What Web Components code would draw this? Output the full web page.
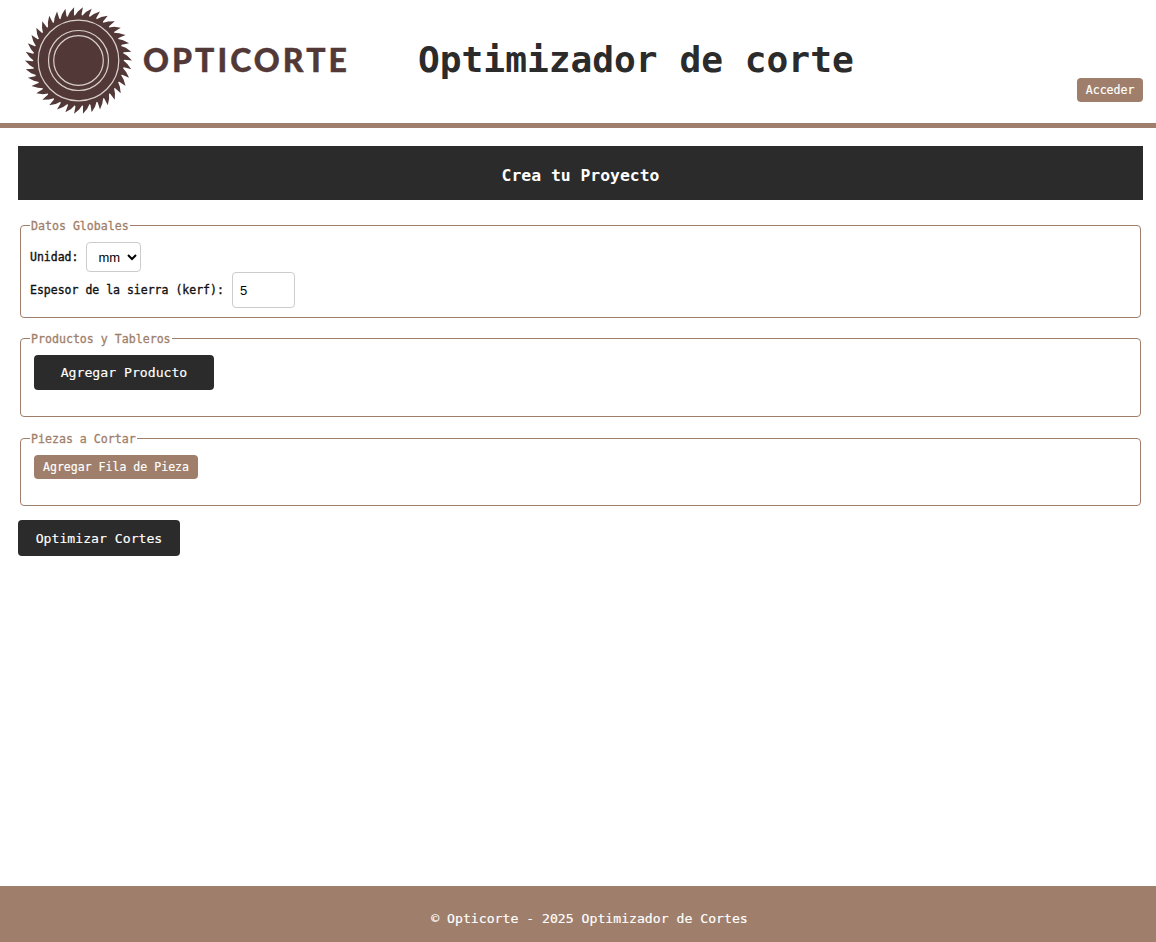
<!DOCTYPE html>
<html lang="es">
<head>
<meta charset="utf-8">
<title>Optimizador de corte</title>
<style>
  html, body { margin: 0; height: 100%; }
  body {
    display: flex;
    flex-direction: column;
    min-height: 942px;
    font-family: "DejaVu Sans Mono", monospace;
    background: #ffffff;
    color: #111111;
  }
  main { display: block; flex: 1; padding: 18px 13px 0 18px; }
</style>
</head>
<body>
<app-header></app-header>
<main>
  <page-banner>Crea tu Proyecto</page-banner>

  <form-section legend="Datos Globales" class="first">
    <labeled-field label="Unidad:" kind="select" value="mm"></labeled-field>
    <labeled-field label="Espesor de la sierra (kerf):" kind="input" value="5"></labeled-field>
  </form-section>

  <form-section legend="Productos y Tableros" pad="8px 9px 26px">
    <app-button variant="dark">Agregar Producto</app-button>
  </form-section>

  <form-section legend="Piezas a Cortar" class="third" pad="8px 9px 26px">
    <app-button variant="small">Agregar Fila de Pieza</app-button>
  </form-section>

  <app-button variant="main">Optimizar Cortes</app-button>
</main>
<app-footer>© Opticorte - 2025 Optimizador de Cortes</app-footer>

<script>
const BROWN = '#9f7f6b';
const DARK = '#2b2b2b';

class SawLogo extends HTMLElement {
  constructor() {
    super();
    const root = this.attachShadow({ mode: 'open' });
    root.innerHTML = `
      <style>
      :host { display: flex; align-items: center; width: 348px; height: 120px; margin-bottom: 3px; }
      svg { display: block; flex: none; margin-left: 25px; }
      span {
        margin-left: 11px;
        font: 900 32px/1 Lato, sans-serif;
        letter-spacing: 3.05px;
        -webkit-text-stroke: 0.4px #533838;
        color: #533838;
        white-space: nowrap;
      }
      </style>
      <svg width="107" height="107" viewBox="-53.5 -53.5 107 107">
        <polygon fill="#533838" points="${this.teeth(38, 45, 53.5)}"></polygon>
        <g fill="none" stroke="#d9d0cc">
          <circle r="40.3" stroke-width="1.2"></circle>
          <circle r="30" stroke-width="1.2"></circle>
          <circle r="24.8" stroke-width="1.2"></circle>
        </g>
      </svg>
      <span>OPTICORTE</span>
    `;
  }

  // saw teeth: back slope, hooked tip, then a radial face down to the gullet
  teeth(count, inner, outer) {
    const step = (Math.PI * 2) / count;
    const point = (angle, r) => `${(Math.cos(angle) * r).toFixed(2)},${(Math.sin(angle) * r).toFixed(2)}`;
    const points = [];
    for (let i = 0; i < count; i++) {
      const a = i * step;
      points.push(point(a, inner));
      points.push(point(a + step * 0.42, inner + 4));
      points.push(point(a + step * 1.0, outer));
      points.push(point(a + step * 0.9, inner + 1));
    }
    return points.join(' ');
  }
}

class AppHeader extends HTMLElement {
  constructor() {
    super();
    const root = this.attachShadow({ mode: 'open' });
    root.innerHTML = `
      <style>
      :host {
        display: flex;
        align-items: center;
        flex: none;
        height: 123px;
        padding-right: 13px;
        background: #ffffff;
        border-bottom: 5px solid ${BROWN};
      }
      h1 {
        margin: 0 0 3px 70px;
        font: 700 36.2px/44px "DejaVu Sans Mono", monospace;
        color: ${DARK};
        white-space: nowrap;
      }
      app-button { margin-left: auto; align-self: flex-end; margin-bottom: 21px; }
      </style>
      <saw-logo></saw-logo>
      <h1>Optimizador de corte</h1>
      <app-button variant="small" flush>Acceder</app-button>
    `;
  }
}

class PageBanner extends HTMLElement {
  constructor() {
    super();
    const root = this.attachShadow({ mode: 'open' });
    root.innerHTML = `
      <style>
      :host {
        display: block;
        height: 54px;
        background: ${DARK};
        color: #ffffff;
        font: 700 16.4px/59px "DejaVu Sans Mono", monospace;
        text-align: center;
      }
      </style>
      <slot></slot>
    `;
  }
}

class FormSection extends HTMLElement {
  constructor() {
    super();
    const root = this.attachShadow({ mode: 'open' });
    root.innerHTML = `
      <style>
      :host { display: block; margin: 12px 2px 0; }
      :host(.first) { margin-top: 17px; }
      :host(.third) { margin-top: 13px; }
      fieldset {
        margin: 0;
        padding: 8px 9px 9px;
        min-width: 0;
        border: 1px solid ${BROWN};
        border-radius: 4px;
      }
      legend {
        padding: 2px 1px 0;
        font: 400 11.6px/15px "DejaVu Sans Mono", monospace;
        -webkit-text-stroke: 0.3px ${BROWN};
        color: ${BROWN};
      }
      </style>
      <fieldset>
        <legend></legend>
        <slot></slot>
      </fieldset>
    `;
    root.querySelector('legend').textContent = this.getAttribute('legend');
    if (this.hasAttribute('pad')) {
      root.querySelector('fieldset').style.padding = this.getAttribute('pad');
    }
  }
}

class LabeledField extends HTMLElement {
  constructor() {
    super();
    const root = this.attachShadow({ mode: 'open' });
    const value = this.getAttribute('value');
    const control = this.getAttribute('kind') === 'select'
      ? `<select><option>${value}</option><option>cm</option></select>`
      : `<input type="text" value="${value}">`;
    root.innerHTML = `
      <style>
      :host { display: flex; align-items: center; }
      label {
        font: 400 11.5px/15px "DejaVu Sans Mono", monospace;
        -webkit-text-stroke: 0.35px #111111;
        color: #111111;
        margin-right: 8px;
        white-space: nowrap;
      }
      select, input {
        box-sizing: border-box;
        border: 1px solid #cccccc;
        border-radius: 4px;
        background: #ffffff;
        color: #000000;
        font: 13px "Liberation Sans", sans-serif;
      }
      select { width: 55px; height: 30px; padding: 0 0 0 7px; }
      input { width: 63px; height: 36px; padding: 0 7px; }
      </style>
      <label></label>${control}
    `;
    root.querySelector('label').textContent = this.getAttribute('label');
  }
}

class AppButton extends HTMLElement {
  constructor() {
    super();
    const root = this.attachShadow({ mode: 'open' });
    root.innerHTML = `
      <style>
      :host { display: block; width: max-content; }
      button {
        display: block;
        border: 0;
        border-radius: 4px;
        color: #ffffff;
        cursor: pointer;
        white-space: nowrap;
        -webkit-text-stroke: 0.15px #ffffff;
      }
      :host([variant="dark"]) button {
        width: 180px; height: 35px; margin-left: 4px;
        background: ${DARK};
        font: 400 13.15px "DejaVu Sans Mono", monospace;
      }
      :host([variant="small"]) button {
        height: 24px; margin-left: 4px; padding: 0 9px;
        background: ${BROWN};
        font: 400 11.55px "DejaVu Sans Mono", monospace;
      }
      :host([variant="small"][flush]) button { margin-left: 0; padding: 0 8.6px; }
      :host([variant="main"]) button {
        width: 162px; height: 36px; margin-top: 14px;
        background: ${DARK};
        font: 400 13.15px "DejaVu Sans Mono", monospace;
      }
      </style>
      <button type="button"><slot></slot></button>
    `;
  }
}

class AppFooter extends HTMLElement {
  constructor() {
    super();
    const root = this.attachShadow({ mode: 'open' });
    root.innerHTML = `
      <style>
      :host {
        display: block;
        flex: none;
        height: 56px;
        padding-left: 23px;
        background: ${BROWN};
        color: #ffffff;
        font: 400 13.15px/65px "DejaVu Sans Mono", monospace;
        -webkit-text-stroke: 0.15px #ffffff;
        text-align: center;
      }
      </style>
      <slot></slot>
    `;
  }
}

customElements.define('saw-logo', SawLogo);
customElements.define('app-button', AppButton);
customElements.define('app-header', AppHeader);
customElements.define('page-banner', PageBanner);
customElements.define('form-section', FormSection);
customElements.define('labeled-field', LabeledField);
customElements.define('app-footer', AppFooter);
</script>
</body>
</html>
